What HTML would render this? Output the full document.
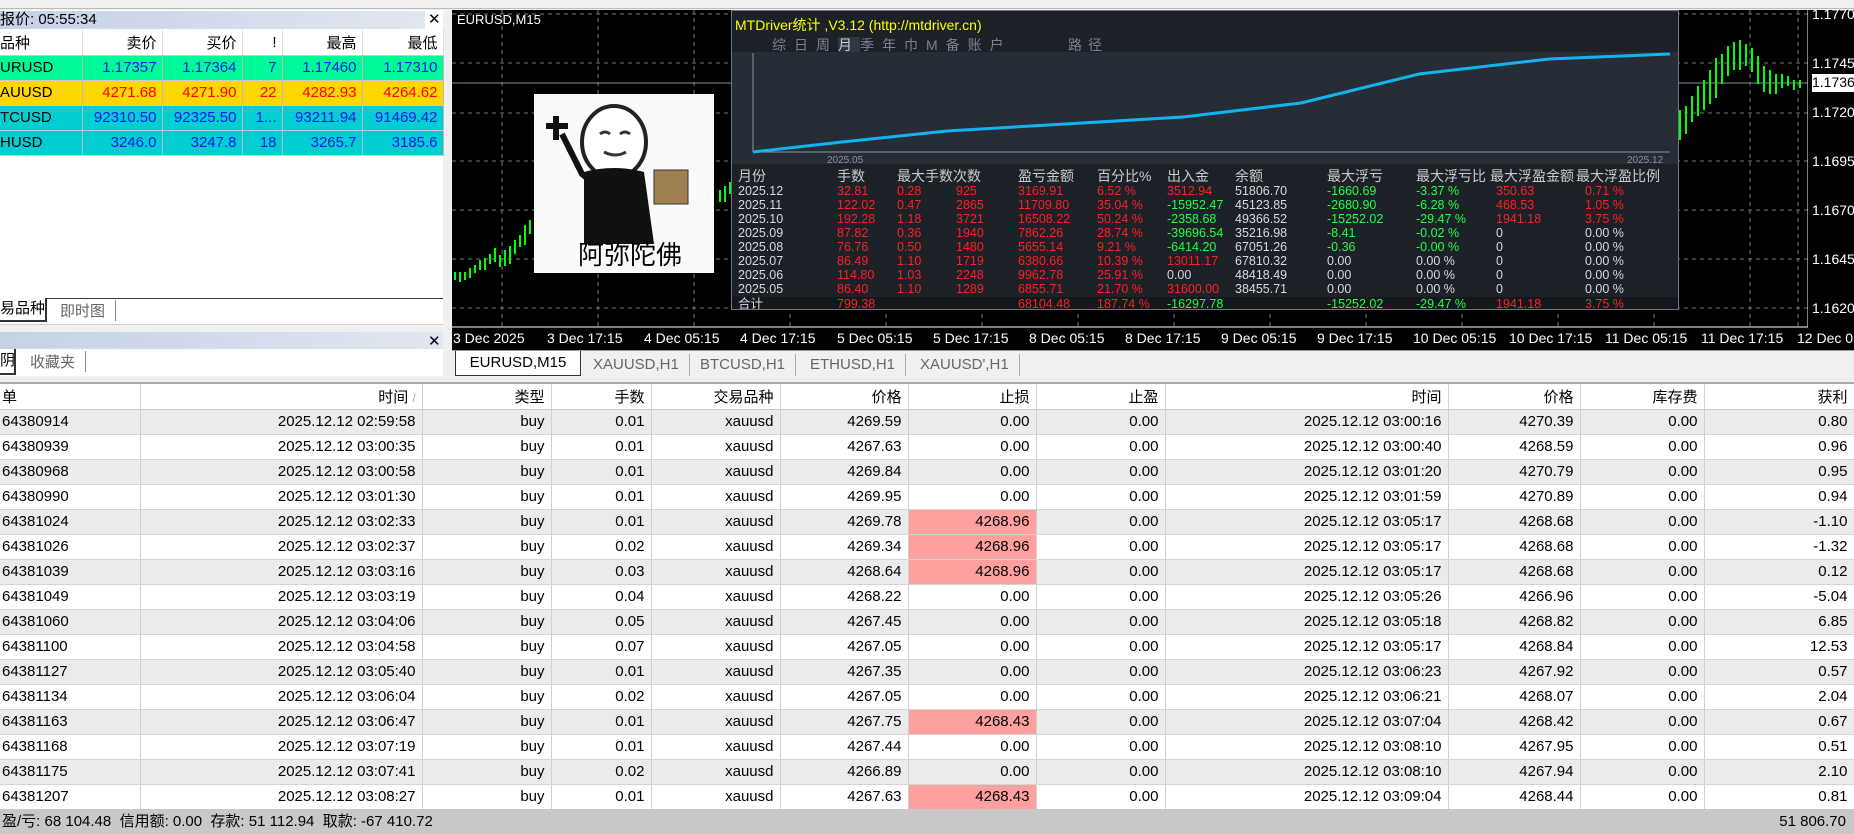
<!DOCTYPE html>
<html><head><meta charset="utf-8">
<style>
*{margin:0;padding:0;box-sizing:border-box}
body{width:1854px;height:834px;overflow:hidden;background:#f0f0f0;font-family:"Liberation Sans","Noto Sans CJK SC",sans-serif;position:relative}
.a{position:absolute}
.lp td{height:25px;border-right:1px solid #bbb;border-bottom:1px solid #ccc;text-align:right;padding-right:5px;font-size:15px;color:#1a1ae6;white-space:nowrap;overflow:hidden}
.lp td:first-child{text-align:left;padding-left:0;color:#000}
.lp th{height:25px;font-weight:normal;text-align:right;padding-right:5px;font-size:15px;border-right:1px solid #ddd;border-bottom:1px solid #ccc}
.lp th:first-child{text-align:left}
.st{font-size:12.5px;color:#e8e8e8;line-height:14px;white-space:nowrap}
.r{color:#ff2020}.g{color:#20ff40}.w{color:#d8d8e0}
.bt{border-collapse:collapse;table-layout:fixed;width:1854px;font-size:15px}
.bt td,.bt th{height:25px;border-right:1px solid #d0d0d0;border-bottom:1px solid #d4d4d4;text-align:right;padding-right:6px;white-space:nowrap;overflow:hidden;font-weight:normal}
.bt td:first-child,.bt th:first-child{text-align:left;padding-left:2px}
.bt tr:nth-child(even) td{background:#ebebeb}
.bt tr:nth-child(odd) td{background:#fff}
.bt th{background:#fff;border-bottom:1px solid #c8c8c8}
.bt td.rd{background:#ffa0a0 !important}
.pl{position:absolute;left:1812px;color:#fff;font-size:14px}
.tl{position:absolute;top:330px;color:#fff;font-size:14px;white-space:nowrap}
.tab{position:absolute;top:354px;height:22px;font-size:15px;color:#666;padding:2px 10px;border-right:1px solid #aaa}
</style></head><body>
<div class="a" style="left:0;top:0;width:1854px;height:9px;background:#f0f0f0;border-bottom:1px solid #bbb"></div>
<div class="a" style="left:0;top:10px;width:443px;height:365px;background:#fff"></div>
<div class="a" style="left:0;top:11px;width:425px;height:18px;background:linear-gradient(90deg,#c4d2e4,#dfe7f1);font-size:15px;line-height:18px;padding-left:0">报价: 05:55:34</div>
<div class="a" style="left:428px;top:10px;font-size:15px">✕</div>
<table class="a lp" style="left:0;top:30px;width:443px;border-collapse:collapse;table-layout:fixed">
<colgroup><col style="width:82px"><col style="width:80px"><col style="width:80px"><col style="width:40px"><col style="width:80px"><col style="width:81px"></colgroup>
<tr><th>品种</th><th>卖价</th><th>买价</th><th>!</th><th>最高</th><th>最低</th></tr>
<tr style="background:#00fa9a"><td>URUSD</td><td>1.17357</td><td>1.17364</td><td>7</td><td>1.17460</td><td>1.17310</td></tr>
<tr style="background:#ffd700"><td>AUUSD</td><td style="color:#f00">4271.68</td><td style="color:#f00">4271.90</td><td style="color:#f00">22</td><td style="color:#f00">4282.93</td><td style="color:#f00">4264.62</td></tr>
<tr style="background:#00ced1"><td>TCUSD</td><td>92310.50</td><td>92325.50</td><td>1...</td><td>93211.94</td><td>91469.42</td></tr>
<tr style="background:#00ced1"><td>HUSD</td><td>3246.0</td><td>3247.8</td><td>18</td><td>3265.7</td><td>3185.6</td></tr>
</table>
<div class="a" style="left:0;top:298px;width:443px;height:1px;background:#333"></div>
<div class="a" style="left:0;top:298px;width:47px;height:24px;background:#fff;border-right:2px solid #333;border-bottom:2px solid #333;font-size:15px;line-height:22px">易品种</div>
<div class="a" style="left:60px;top:300px;font-size:15px;color:#666;padding-right:10px;border-right:1px solid #888">即时图</div>
<div class="a" style="left:0;top:324px;width:443px;height:8px;background:#f0f0f0;border-top:1px solid #ccc"></div>
<div class="a" style="left:0;top:332px;width:443px;height:17px;background:linear-gradient(90deg,#c4d2e4,#dfe7f1)"></div>
<div class="a" style="left:428px;top:332px;font-size:15px">✕</div>
<div class="a" style="left:0;top:350px;width:443px;height:26px;background:#fff"></div>
<div class="a" style="left:0;top:349px;width:16px;height:26px;border-right:2px solid #333;border-bottom:2px solid #333;font-size:15px">阴</div>
<div class="a" style="left:30px;top:351px;font-size:15px;color:#666;padding-right:10px;border-right:1px solid #888">收藏夹</div>
<div class="a" style="left:452px;top:10px;width:1402px;height:340px;background:#000"></div>
<svg class="a" style="left:452px;top:10px" width="1402" height="340">
<g stroke="#6c7a8a" stroke-dasharray="4,4" stroke-width="1">
<line x1="0" y1="4" x2="1356" y2="4"/><line x1="0" y1="53" x2="1356" y2="53"/><line x1="0" y1="103" x2="1356" y2="103"/><line x1="0" y1="151" x2="1356" y2="151"/><line x1="0" y1="200" x2="1356" y2="200"/><line x1="0" y1="249" x2="1356" y2="249"/><line x1="0" y1="298" x2="1356" y2="298"/>
<line x1="50" y1="0" x2="50" y2="317"/><line x1="146" y1="0" x2="146" y2="317"/><line x1="242" y1="0" x2="242" y2="317"/><line x1="338" y1="0" x2="338" y2="317"/><line x1="434" y1="0" x2="434" y2="317"/><line x1="530" y1="0" x2="530" y2="317"/><line x1="626" y1="0" x2="626" y2="317"/><line x1="722" y1="0" x2="722" y2="317"/><line x1="818" y1="0" x2="818" y2="317"/><line x1="914" y1="0" x2="914" y2="317"/><line x1="1010" y1="0" x2="1010" y2="317"/><line x1="1106" y1="0" x2="1106" y2="317"/><line x1="1202" y1="0" x2="1202" y2="317"/><line x1="1298" y1="0" x2="1298" y2="317"/><line x1="1346" y1="0" x2="1346" y2="317"/>
</g>
<line x1="0" y1="73" x2="1356" y2="73" stroke="#8090a0"/>
<line x1="1356" y1="0" x2="1356" y2="317" stroke="#fff"/>
<line x1="0" y1="317" x2="1356" y2="317" stroke="#fff"/>
<g stroke="#00ff00" stroke-width="2">
<path d="M3 262v8M8 262v10M13 262v8M18 258v10M23 255v8M28 250v10M33 248v12M38 244v10M43 238v14M48 245v12M53 240v16M58 236v18M63 230v14M68 225v12M73 215v20M78 210v14M83 205v16M88 198v14M93 196v12M98 190v14M103 184v16M108 188v10M113 185v12M118 180v12M123 186v14M128 178v10M133 174v12M138 170v14M143 166v12M148 160v18M153 165v12M158 158v14M163 155v16M168 150v20M173 146v14M178 150v12M183 142v16M188 146v12M193 140v18M198 136v14"/>
<path d="M268 180v12M273 176v16M278 172v12M283 176v14M288 182v24M293 188v18M298 184v16M303 180v14"/>
<path d="M1228 100v30M1234 96v28M1240 86v26M1246 76v30M1252 70v30M1258 60v34M1264 48v40M1270 44v30M1276 36v30M1282 32v28M1288 30v30M1294 34v22M1300 38v24M1306 46v28M1312 56v26M1318 60v24M1324 64v20M1330 64v14M1336 66v10M1342 70v10M1348 70v8"/>
</g>
</svg>
<div class="a" style="left:1808px;top:10px;width:46px;height:340px;background:#000"></div>
<div class="pl" style="top:6px">1.1770</div>
<div class="pl" style="top:55px">1.1745</div>
<div class="pl" style="top:74px;background:#fff;color:#000;width:42px;height:18px">1.1736</div>
<div class="pl" style="top:104px">1.1720</div>
<div class="pl" style="top:153px">1.1695</div>
<div class="pl" style="top:202px">1.1670</div>
<div class="pl" style="top:251px">1.1645</div>
<div class="pl" style="top:300px">1.1620</div>
<div class="tl" style="left:453px">3 Dec 2025</div>
<div class="tl" style="left:547px">3 Dec 17:15</div>
<div class="tl" style="left:644px">4 Dec 05:15</div>
<div class="tl" style="left:740px">4 Dec 17:15</div>
<div class="tl" style="left:837px">5 Dec 05:15</div>
<div class="tl" style="left:933px">5 Dec 17:15</div>
<div class="tl" style="left:1029px">8 Dec 05:15</div>
<div class="tl" style="left:1125px">8 Dec 17:15</div>
<div class="tl" style="left:1221px">9 Dec 05:15</div>
<div class="tl" style="left:1317px">9 Dec 17:15</div>
<div class="tl" style="left:1413px">10 Dec 05:15</div>
<div class="tl" style="left:1509px">10 Dec 17:15</div>
<div class="tl" style="left:1605px">11 Dec 05:15</div>
<div class="tl" style="left:1701px">11 Dec 17:15</div>
<div class="tl" style="left:1797px">12 Dec 05</div>
<div class="a" style="left:457px;top:12px;color:#fff;font-size:13px">EURUSD,M15</div>
<div class="a" style="left:534px;top:94px;width:180px;height:179px;background:#fafafa;overflow:hidden">
<svg width="180" height="179" class="a" style="left:0;top:0">
<path d="M12 32h22M22 22v24" stroke="#111" stroke-width="6"/>
<path d="M28 40 L48 80 L60 90" stroke="#111" stroke-width="6" fill="none"/>
<ellipse cx="80" cy="48" rx="32" ry="36" fill="#fff" stroke="#222" stroke-width="4"/>
<path d="M66 40q5-4 10 0M86 40q5-4 10 0M70 58q12 6 22 0" stroke="#333" stroke-width="3" fill="none"/>
<path d="M50 78 Q80 70 110 78 L120 150 L50 150 Z" fill="#111"/>
<rect x="120" y="76" width="34" height="34" fill="#a08050" stroke="#333"/>
</svg>
<div class="a" style="left:44px;top:141px;font-size:26px;color:#000">阿弥陀佛</div>
</div>
<div class="a" style="left:731px;top:10px;width:948px;height:300px;background:#1c2128;border:1px solid #6a7888;overflow:hidden">
<div class="a" style="left:3px;top:4px;color:#ffff00;font-size:14px">MTDriver统计 ,V3.12 (http://mtdriver.cn)</div>
<div class="a" style="left:40px;top:24px;color:#7a8290;font-size:14px;letter-spacing:8px">综日周<span style="background:#2e3744;color:#ccd">月</span>季年巾M备账户</div>
<div class="a" style="left:336px;top:24px;color:#7a8290;font-size:14px;letter-spacing:6px">路径</div>
<div class="a" style="left:0;top:41px;width:948px;height:112px;background:#262d37"></div>
<svg class="a" style="left:0;top:40px" width="948" height="114">
<line x1="21" y1="2" x2="21" y2="101" stroke="#8a93a0"/>
<line x1="21" y1="101" x2="938" y2="101" stroke="#8a93a0"/>
<polyline points="21,101 110,91 215,80 333,73 451,66 569,52 687,23 817,8 938,3" fill="none" stroke="#12b4f0" stroke-width="3"/>
<text x="95" y="112" fill="#8a93a0" font-size="10" font-family="Liberation Sans">2025.05</text>
<text x="895" y="112" fill="#8a93a0" font-size="10" font-family="Liberation Sans">2025.12</text>
</svg>
<div class="a st" style="left:6px;top:156px;font-size:14px">
<div class="a" style="left:0;top:0;width:940px;line-height:18px;color:#ccc">月份<span class="a" style="left:99px">手数</span><span class="a" style="left:159px">最大手数次数</span><span class="a" style="left:280px">盈亏金额</span><span class="a" style="left:359px">百分比%</span><span class="a" style="left:429px">出入金</span><span class="a" style="left:497px">余额</span><span class="a" style="left:589px">最大浮亏</span><span class="a" style="left:678px">最大浮亏比</span><span class="a" style="left:752px">最大浮盈金额</span><span class="a" style="left:838px">最大浮盈比例</span></div>
</div>
<div class="a st" style="left:6px;top:173px;width:940px">
<div style="position:relative;height:14px"><span class="w">2025.12</span><span class="a r" style="left:99px">32.81</span><span class="a r" style="left:159px">0.28</span><span class="a r" style="left:218px">925</span><span class="a r" style="left:280px">3169.91</span><span class="a r" style="left:359px">6.52 %</span><span class="a r" style="left:429px">3512.94</span><span class="a w" style="left:497px">51806.70</span><span class="a g" style="left:589px">-1660.69</span><span class="a g" style="left:678px">-3.37 %</span><span class="a r" style="left:758px">350.63</span><span class="a r" style="left:847px">0.71 %</span></div>
<div style="position:relative;height:14px"><span class="w">2025.11</span><span class="a r" style="left:99px">122.02</span><span class="a r" style="left:159px">0.47</span><span class="a r" style="left:218px">2865</span><span class="a r" style="left:280px">11709.80</span><span class="a r" style="left:359px">35.04 %</span><span class="a g" style="left:429px">-15952.47</span><span class="a w" style="left:497px">45123.85</span><span class="a g" style="left:589px">-2680.90</span><span class="a g" style="left:678px">-6.28 %</span><span class="a r" style="left:758px">468.53</span><span class="a r" style="left:847px">1.05 %</span></div>
<div style="position:relative;height:14px"><span class="w">2025.10</span><span class="a r" style="left:99px">192.28</span><span class="a r" style="left:159px">1.18</span><span class="a r" style="left:218px">3721</span><span class="a r" style="left:280px">16508.22</span><span class="a r" style="left:359px">50.24 %</span><span class="a g" style="left:429px">-2358.68</span><span class="a w" style="left:497px">49366.52</span><span class="a g" style="left:589px">-15252.02</span><span class="a g" style="left:678px">-29.47 %</span><span class="a r" style="left:758px">1941.18</span><span class="a r" style="left:847px">3.75 %</span></div>
<div style="position:relative;height:14px"><span class="w">2025.09</span><span class="a r" style="left:99px">87.82</span><span class="a r" style="left:159px">0.36</span><span class="a r" style="left:218px">1940</span><span class="a r" style="left:280px">7862.26</span><span class="a r" style="left:359px">28.74 %</span><span class="a g" style="left:429px">-39696.54</span><span class="a w" style="left:497px">35216.98</span><span class="a g" style="left:589px">-8.41</span><span class="a g" style="left:678px">-0.02 %</span><span class="a w" style="left:758px">0</span><span class="a w" style="left:847px">0.00 %</span></div>
<div style="position:relative;height:14px"><span class="w">2025.08</span><span class="a r" style="left:99px">76.76</span><span class="a r" style="left:159px">0.50</span><span class="a r" style="left:218px">1480</span><span class="a r" style="left:280px">5655.14</span><span class="a r" style="left:359px">9.21 %</span><span class="a g" style="left:429px">-6414.20</span><span class="a w" style="left:497px">67051.26</span><span class="a g" style="left:589px">-0.36</span><span class="a g" style="left:678px">-0.00 %</span><span class="a w" style="left:758px">0</span><span class="a w" style="left:847px">0.00 %</span></div>
<div style="position:relative;height:14px"><span class="w">2025.07</span><span class="a r" style="left:99px">86.49</span><span class="a r" style="left:159px">1.10</span><span class="a r" style="left:218px">1719</span><span class="a r" style="left:280px">6380.66</span><span class="a r" style="left:359px">10.39 %</span><span class="a r" style="left:429px">13011.17</span><span class="a w" style="left:497px">67810.32</span><span class="a w" style="left:589px">0.00</span><span class="a w" style="left:678px">0.00 %</span><span class="a w" style="left:758px">0</span><span class="a w" style="left:847px">0.00 %</span></div>
<div style="position:relative;height:14px"><span class="w">2025.06</span><span class="a r" style="left:99px">114.80</span><span class="a r" style="left:159px">1.03</span><span class="a r" style="left:218px">2248</span><span class="a r" style="left:280px">9962.78</span><span class="a r" style="left:359px">25.91 %</span><span class="a w" style="left:429px">0.00</span><span class="a w" style="left:497px">48418.49</span><span class="a w" style="left:589px">0.00</span><span class="a w" style="left:678px">0.00 %</span><span class="a w" style="left:758px">0</span><span class="a w" style="left:847px">0.00 %</span></div>
<div style="position:relative;height:14px"><span class="w">2025.05</span><span class="a r" style="left:99px">86.40</span><span class="a r" style="left:159px">1.10</span><span class="a r" style="left:218px">1289</span><span class="a r" style="left:280px">6855.71</span><span class="a r" style="left:359px">21.70 %</span><span class="a r" style="left:429px">31600.00</span><span class="a w" style="left:497px">38455.71</span><span class="a w" style="left:589px">0.00</span><span class="a w" style="left:678px">0.00 %</span><span class="a w" style="left:758px">0</span><span class="a w" style="left:847px">0.00 %</span></div>
</div>
<div class="a st" style="left:0;top:286px;width:948px;height:14px;background:#14171b;padding-left:6px;line-height:14px"><span class="w">合计</span><span class="a r" style="left:105px">799.38</span><span class="a r" style="left:286px">68104.48</span><span class="a r" style="left:365px">187.74 %</span><span class="a g" style="left:435px">-16297.78</span><span class="a g" style="left:595px">-15252.02</span><span class="a g" style="left:684px">-29.47 %</span><span class="a r" style="left:764px">1941.18</span><span class="a r" style="left:853px">3.75 %</span></div>
</div>
<div class="a" style="left:452px;top:350px;width:1402px;height:28px;background:#f0f0f0;border-top:1px solid #999"></div>
<div class="a" style="left:455px;top:351px;width:126px;height:25px;background:#fff;border:1px solid #333;border-top:none;font-size:15px;text-align:center;line-height:24px">EURUSD,M15</div>
<div class="tab" style="left:583px">XAUUSD,H1</div>
<div class="tab" style="left:690px">BTCUSD,H1</div>
<div class="tab" style="left:800px">ETHUSD,H1</div>
<div class="tab" style="left:910px">XAUUSD',H1</div>
<div class="a" style="left:0;top:378px;width:1854px;height:6px;background:#f0f0f0;border-bottom:2px solid #aaa"></div>
<table class="a bt" style="left:0;top:384px">
<colgroup><col style="width:140px"><col style="width:282px"><col style="width:129px"><col style="width:100px"><col style="width:129px"><col style="width:128px"><col style="width:128px"><col style="width:129px"><col style="width:283px"><col style="width:132px"><col style="width:124px"><col style="width:150px"></colgroup>
<tr><th>单</th><th>时间 <span style="color:#999;font-size:11px">/</span></th><th>类型</th><th>手数</th><th>交易品种</th><th>价格</th><th>止损</th><th>止盈</th><th>时间</th><th>价格</th><th>库存费</th><th>获利</th></tr>
<tr><td>64380914</td><td>2025.12.12 02:59:58</td><td>buy</td><td>0.01</td><td>xauusd</td><td>4269.59</td><td>0.00</td><td>0.00</td><td>2025.12.12 03:00:16</td><td>4270.39</td><td>0.00</td><td>0.80</td></tr>
<tr><td>64380939</td><td>2025.12.12 03:00:35</td><td>buy</td><td>0.01</td><td>xauusd</td><td>4267.63</td><td>0.00</td><td>0.00</td><td>2025.12.12 03:00:40</td><td>4268.59</td><td>0.00</td><td>0.96</td></tr>
<tr><td>64380968</td><td>2025.12.12 03:00:58</td><td>buy</td><td>0.01</td><td>xauusd</td><td>4269.84</td><td>0.00</td><td>0.00</td><td>2025.12.12 03:01:20</td><td>4270.79</td><td>0.00</td><td>0.95</td></tr>
<tr><td>64380990</td><td>2025.12.12 03:01:30</td><td>buy</td><td>0.01</td><td>xauusd</td><td>4269.95</td><td>0.00</td><td>0.00</td><td>2025.12.12 03:01:59</td><td>4270.89</td><td>0.00</td><td>0.94</td></tr>
<tr><td>64381024</td><td>2025.12.12 03:02:33</td><td>buy</td><td>0.01</td><td>xauusd</td><td>4269.78</td><td class="rd">4268.96</td><td>0.00</td><td>2025.12.12 03:05:17</td><td>4268.68</td><td>0.00</td><td>-1.10</td></tr>
<tr><td>64381026</td><td>2025.12.12 03:02:37</td><td>buy</td><td>0.02</td><td>xauusd</td><td>4269.34</td><td class="rd">4268.96</td><td>0.00</td><td>2025.12.12 03:05:17</td><td>4268.68</td><td>0.00</td><td>-1.32</td></tr>
<tr><td>64381039</td><td>2025.12.12 03:03:16</td><td>buy</td><td>0.03</td><td>xauusd</td><td>4268.64</td><td class="rd">4268.96</td><td>0.00</td><td>2025.12.12 03:05:17</td><td>4268.68</td><td>0.00</td><td>0.12</td></tr>
<tr><td>64381049</td><td>2025.12.12 03:03:19</td><td>buy</td><td>0.04</td><td>xauusd</td><td>4268.22</td><td>0.00</td><td>0.00</td><td>2025.12.12 03:05:26</td><td>4266.96</td><td>0.00</td><td>-5.04</td></tr>
<tr><td>64381060</td><td>2025.12.12 03:04:06</td><td>buy</td><td>0.05</td><td>xauusd</td><td>4267.45</td><td>0.00</td><td>0.00</td><td>2025.12.12 03:05:18</td><td>4268.82</td><td>0.00</td><td>6.85</td></tr>
<tr><td>64381100</td><td>2025.12.12 03:04:58</td><td>buy</td><td>0.07</td><td>xauusd</td><td>4267.05</td><td>0.00</td><td>0.00</td><td>2025.12.12 03:05:17</td><td>4268.84</td><td>0.00</td><td>12.53</td></tr>
<tr><td>64381127</td><td>2025.12.12 03:05:40</td><td>buy</td><td>0.01</td><td>xauusd</td><td>4267.35</td><td>0.00</td><td>0.00</td><td>2025.12.12 03:06:23</td><td>4267.92</td><td>0.00</td><td>0.57</td></tr>
<tr><td>64381134</td><td>2025.12.12 03:06:04</td><td>buy</td><td>0.02</td><td>xauusd</td><td>4267.05</td><td>0.00</td><td>0.00</td><td>2025.12.12 03:06:21</td><td>4268.07</td><td>0.00</td><td>2.04</td></tr>
<tr><td>64381163</td><td>2025.12.12 03:06:47</td><td>buy</td><td>0.01</td><td>xauusd</td><td>4267.75</td><td class="rd">4268.43</td><td>0.00</td><td>2025.12.12 03:07:04</td><td>4268.42</td><td>0.00</td><td>0.67</td></tr>
<tr><td>64381168</td><td>2025.12.12 03:07:19</td><td>buy</td><td>0.01</td><td>xauusd</td><td>4267.44</td><td>0.00</td><td>0.00</td><td>2025.12.12 03:08:10</td><td>4267.95</td><td>0.00</td><td>0.51</td></tr>
<tr><td>64381175</td><td>2025.12.12 03:07:41</td><td>buy</td><td>0.02</td><td>xauusd</td><td>4266.89</td><td>0.00</td><td>0.00</td><td>2025.12.12 03:08:10</td><td>4267.94</td><td>0.00</td><td>2.10</td></tr>
<tr><td>64381207</td><td>2025.12.12 03:08:27</td><td>buy</td><td>0.01</td><td>xauusd</td><td>4267.63</td><td class="rd">4268.43</td><td>0.00</td><td>2025.12.12 03:09:04</td><td>4268.44</td><td>0.00</td><td>0.81</td></tr>
</table>
<div class="a" style="left:0;top:809px;width:1854px;height:25px;background:#c8c8c8;font-size:15px;line-height:25px;padding-left:2px">盈/亏: 68 104.48&nbsp; 信用额: 0.00&nbsp; 存款: 51 112.94&nbsp; 取款: -67 410.72<span style="position:absolute;right:8px">51 806.70</span></div>
</body></html>
